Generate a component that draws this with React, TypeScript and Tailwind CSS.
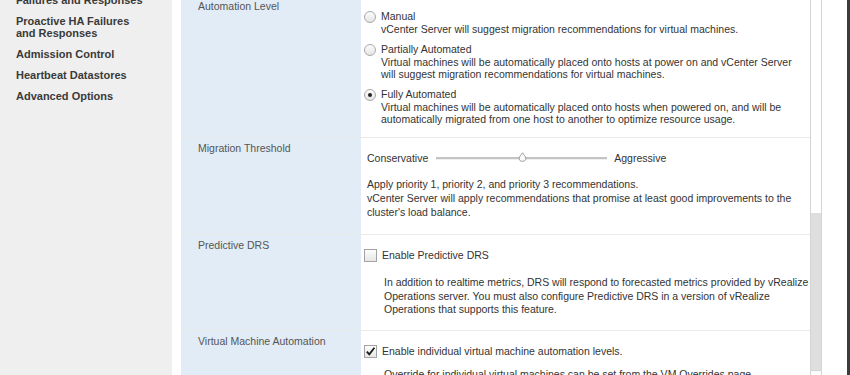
import React from "react";

const sideItems = [
  ["Failures and Responses"],
  ["Proactive HA Failures", "and Responses"],
  ["Admission Control"],
  ["Heartbeat Datastores"],
  ["Advanced Options"],
];

function Radio({ checked }: { checked?: boolean }) {
  return (
    <span className="mt-[0.5px] flex h-[12px] w-[12px] shrink-0 items-center justify-center rounded-full border border-[#a9a9a9] bg-gradient-to-b from-[#fdfdfd] to-[#e4e4e4]">
      {checked && <span className="h-[4px] w-[4px] rounded-full bg-[#222]" />}
    </span>
  );
}

function Checkbox({ checked }: { checked?: boolean }) {
  return (
    <span className="flex h-[13px] w-[13px] shrink-0 items-center justify-center border border-[#a3a3a3] bg-gradient-to-b from-[#fdfdfd] to-[#e6e6e6]">
      {checked && (
        <svg width="11" height="11" viewBox="0 0 11 11">
          <path d="M1.8 5.6 L4.3 8.3 L9.4 1.8" fill="none" stroke="#1a1a1a" strokeWidth="1.8" />
        </svg>
      )}
    </span>
  );
}

function Row({ label, children }: { label: string; children: React.ReactNode }) {
  return (
    <div className="grid grid-cols-[180px_449px] border-b border-[#e9e9e9]">
      <div className="bg-[#e2ecf6] pl-[17px] pt-[4px] leading-[13px] text-[#555]">{label}</div>
      <div className="pl-[3px] pt-[14px]">{children}</div>
    </div>
  );
}

export default function App() {
  return (
    <div className="flex h-[375px] w-[850px] overflow-hidden whitespace-nowrap bg-white font-['Liberation_Sans',Arial,sans-serif] text-[10.5px] text-[#333]">
      <aside className="w-[172px] shrink-0 bg-[#efefef] pl-[16px]">
        <div className="-mt-[6px] flex flex-col gap-[9px] text-[11px] font-bold leading-[12px] text-[#3a3a3a]">
          {sideItems.map((lines) => (
            <div key={lines[0]}>
              {lines.map((l) => (
                <div key={l}>{l}</div>
              ))}
            </div>
          ))}
        </div>
      </aside>

      <main className="ml-[9px] w-[630px] shrink-0 border-r border-[#d4d4d4]">
        <div className="-mt-[4px]">
          <Row label="Automation Level">
            <div className="flex flex-col gap-[8px] pb-[12px]">
              <div className="flex gap-[5px]">
                <Radio />
                <div>
                  <div className="leading-[13px]">Manual</div>
                  <div className="leading-[12px]">vCenter Server will suggest migration recommendations for virtual machines.</div>
                </div>
              </div>
              <div className="flex gap-[5px]">
                <Radio />
                <div>
                  <div className="leading-[13px]">Partially Automated</div>
                  <div className="leading-[12px]">
                    Virtual machines will be automatically placed onto hosts at power on and vCenter Server
                    <br />
                    will suggest migration recommendations for virtual machines.
                  </div>
                </div>
              </div>
              <div className="flex gap-[5px]">
                <Radio checked />
                <div>
                  <div className="leading-[13px]">Fully Automated</div>
                  <div className="leading-[12px]">
                    Virtual machines will be automatically placed onto hosts when powered on, and will be
                    <br />
                    automatically migrated from one host to another to optimize resource usage.
                  </div>
                </div>
              </div>
            </div>
          </Row>

          <Row label="Migration Threshold">
            <div className="pl-[3px] pb-[15px]">
              <div className="flex items-center leading-[13px]">
                <span>Conservative</span>
                <div className="relative ml-[8px] mr-[7px] h-[3px] w-[171px] border-t-2 border-[#c4c4c4] border-b border-b-[#efefef]">
                  <svg className="absolute -top-[7px] left-[82px]" width="9" height="10" viewBox="0 0 9 10">
                    <path d="M4.5 0.8 C5.5 2.5 7.8 4.5 7.8 6.6 C7.8 8.6 6.3 9.3 4.5 9.3 C2.7 9.3 1.2 8.6 1.2 6.6 C1.2 4.5 3.5 2.5 4.5 0.8 Z" fill="#fafafa" stroke="#9a9a9a" strokeWidth="1" />
                  </svg>
                </div>
                <span>Aggressive</span>
              </div>
              <div className="mt-[12px] leading-[14px]">
                Apply priority 1, priority 2, and priority 3 recommendations.
                <br />
                vCenter Server will apply recommendations that promise at least good improvements to the
                <br />
                cluster's load balance.
              </div>
            </div>
          </Row>

          <Row label="Predictive DRS">
            <div className="pb-[13px]">
              <div className="flex items-center gap-[5px] leading-[13px]">
                <Checkbox />
                <span>Enable Predictive DRS</span>
              </div>
              <div className="mt-[14px] pl-[20px] leading-[13.7px]">
                In addition to realtime metrics, DRS will respond to forecasted metrics provided by vRealize
                <br />
                Operations server. You must also configure Predictive DRS in a version of vRealize
                <br />
                Operations that supports this feature.
              </div>
            </div>
          </Row>

          <Row label="Virtual Machine Automation">
            <div className="pb-[14px]">
              <div className="flex items-center gap-[5px] leading-[13px]">
                <Checkbox checked />
                <span>Enable individual virtual machine automation levels.</span>
              </div>
              <div className="mt-[10px] pl-[20px] leading-[13.7px]">
                Override for individual virtual machines can be set from the VM Overrides page.
              </div>
            </div>
          </Row>
        </div>
      </main>

      <div className="flex w-[11px] shrink-0 flex-col border-r border-[#d4d4d4]">
        <div className="h-[213px] bg-white" />
        <div className="h-[157px] bg-[#dedede]" />
        <div className="flex-1 border-t border-[#d4d4d4] bg-white" />
      </div>

      <div className="flex-1" />
      <div className="w-[3px] shrink-0 bg-[#3c3c3c]" />
    </div>
  );
}
